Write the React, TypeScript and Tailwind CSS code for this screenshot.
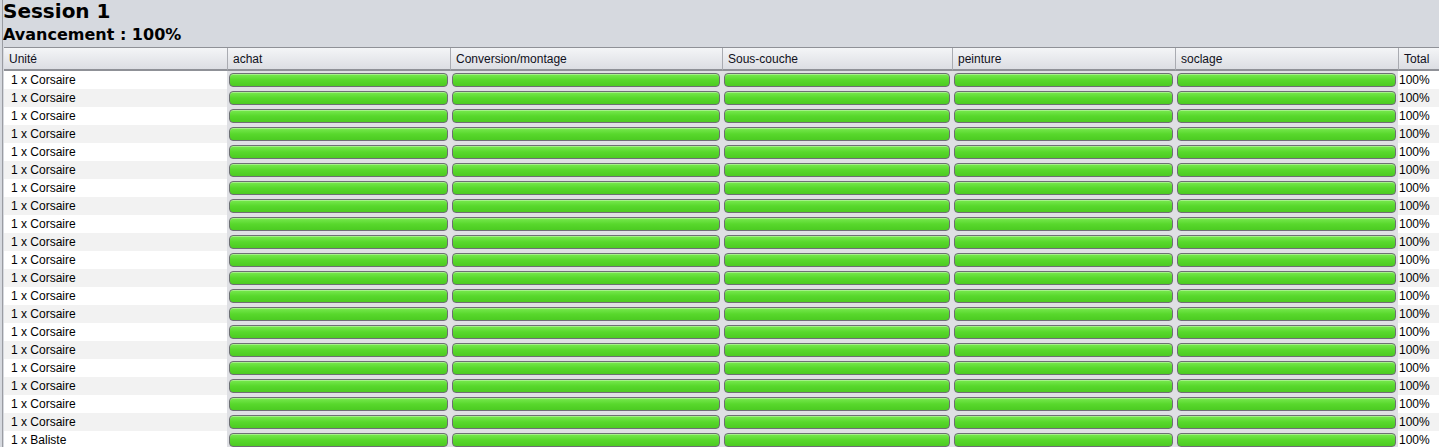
import React from "react";

const COLS = ["Unité", "achat", "Conversion/montage", "Sous-couche", "peinture", "soclage", "Total"];

const ROWS: string[] = [
  ...Array.from({ length: 20 }, () => "1 x Corsaire"),
  "1 x Baliste",
];

function Bar() {
  return (
    <div className="h-full px-[2px] py-[2px] bg-[#dfe0e4]">
      <div className="h-full rounded-[4px] border border-[#6d6f73] bg-gradient-to-b from-[#78ea4e] via-[#58d82c] to-[#4ccb22] shadow-[inset_0_1px_0_rgba(255,255,255,0.35)]" />
    </div>
  );
}

export default function App() {
  return (
    <div
      className="h-[447px] w-[1439px] overflow-hidden bg-[#d6d9df] text-black"
      style={{ fontFamily: '"Liberation Sans", Arial, sans-serif' }}
    >
      <div className="flex h-full">
        <div className="w-[2px] shrink-0" />
        <div className="w-[1px] shrink-0 bg-[#9a9ca2]" />
        <div className="flex-1 flex flex-col">
          <div className="shrink-0 h-[25px] leading-[22px] text-[20px] font-bold" style={{ fontFamily: '"DejaVu Sans", Verdana, sans-serif' }}>
            Session 1
          </div>
          <div className="shrink-0 h-[22px] leading-[19px] text-[16px] font-bold" style={{ fontFamily: '"DejaVu Sans", Verdana, sans-serif' }}>
            Avancement : 100%
          </div>
          <div className="shrink-0 ml-[1px] grid grid-cols-[223px_223px_272px_230px_223px_223px_41px] border-t border-[#8f9197]">
            {COLS.map((c, i) => (
              <div
                key={c}
                className={`h-[23px] leading-[22px] text-[12px] pl-[5px] bg-gradient-to-b from-[#f4f5f7] to-[#dcdee3] border-b-2 border-[#8f9197] text-[#101020] ${i > 0 ? "border-l border-l-[#a9abb1]" : ""}`}
              >
                {c}
              </div>
            ))}
            {ROWS.map((r, ri) => {
              const bg = ri % 2 === 0 ? "bg-white" : "bg-[#f2f2f2]";
              return (
                <React.Fragment key={ri}>
                  <div className={`h-[18px] leading-[18px] text-[12px] pl-[7px] ${bg}`}>{r}</div>
                  {[0, 1, 2, 3, 4].map((k) => (
                    <div key={k} className={`h-[18px] ${bg}`}>
                      <Bar />
                    </div>
                  ))}
                  <div className={`h-[18px] leading-[18px] text-[12px] pl-[1px] ${bg}`}>100%</div>
                </React.Fragment>
              );
            })}
          </div>
        </div>
      </div>
    </div>
  );
}
